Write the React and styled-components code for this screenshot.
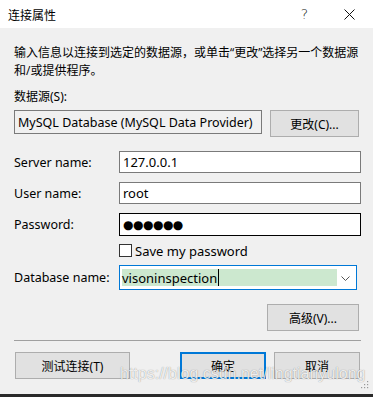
import React from 'react';
import styled, { createGlobalStyle } from 'styled-components';

const Global = createGlobalStyle`
  html, body { margin: 0; padding: 0; background: #f0f0f0; }
  body { width: 373px; height: 397px; overflow: hidden; }
  * { box-sizing: border-box; }
`;

const FONT = `"Noto Sans", "Noto Sans CJK SC", sans-serif`;

const Window = styled.div`
  position: relative;
  width: 373px;
  height: 397px;
  display: flex;
  flex-direction: column;
  background: #f0f0f0;
  font-family: ${FONT};
  font-size: 12.5px;
  color: #000;
  border-bottom: 3px solid #2a2a2a;
`;

const TitleBar = styled.div`
  height: 28px;
  background: #fff;
  display: flex;
  align-items: center;
  padding-left: 8px;
  padding-right: 1px;
`;

const Title = styled.div`
  flex: 1;
  font-size: 12px;
  font-family: "Noto Sans CJK SC", sans-serif;
`;

const CtrlButton = styled.div`
  width: 45px;
  height: 28px;
  display: flex;
  align-items: center;
  justify-content: center;
  font-size: 14px;
  font-family: "DejaVu Sans", sans-serif;
  font-weight: 300;
  color: #111;
`;

const Content = styled.div`
  flex: 1;
  display: flex;
  flex-direction: column;
  padding: 0 12px 0 14px;
`;

const Desc = styled.div`
  margin-top: 16px;
  font-size: 12px;
  line-height: 18px;
  white-space: nowrap;
  font-family: "Open Sans", "Noto Sans CJK SC", sans-serif;
`;

const SectionLabel = styled.div`
  margin-top: 8px;
  font-size: 12px;
  line-height: 18px;
`;

const SourceRow = styled.div`
  margin-top: 4px;
  display: flex;
  align-items: flex-start;
  gap: 8px;
`;

const ReadonlyField = styled.div`
  width: 248px;
  height: 24px;
  border: 1px solid #7a7a7a;
  background: #f0f0f0;
  display: flex;
  align-items: center;
  padding-left: 3px;
  font-size: 12.5px;
  white-space: nowrap;
  overflow: hidden;
`;

const Button = styled.div`
  width: ${p => p.$w}px;
  height: 27px;
  border: ${p => (p.$default ? '2px solid #0078d7' : '1px solid #adadad')};
  background: #e1e1e1;
  display: flex;
  align-items: center;
  justify-content: center;
  font-size: 12px;
  white-space: nowrap;
`;

const FieldRow = styled.div`
  margin-top: ${p => p.$mt}px;
  display: flex;
  align-items: center;
`;

const FieldLabel = styled.div`
  width: 105px;
  font-size: 12.5px;
  white-space: nowrap;
`;

const TextInput = styled.div`
  width: ${p => p.$w || 242}px;
  height: ${p => p.$h || 22}px;
  border: 1px solid ${p => p.$border || '#7a7a7a'};
  background: #fff;
  display: flex;
  align-items: center;
  padding-left: ${p => p.$pl ?? 3}px;
  font-size: 13px;
  position: relative;
`;

const Dots = styled.span`
  font-size: 12px;
  letter-spacing: -0.5px;
  font-family: "DejaVu Sans", sans-serif;
`;

const CheckRow = styled.div`
  margin-top: 8px;
  margin-left: 105px;
  height: 13px;
  display: flex;
  align-items: center;
  gap: 3px;
  font-size: 13px;
`;

const CheckBox = styled.div`
  width: 13px;
  height: 13px;
  border: 1px solid #333;
  background: #fff;
`;

const Selection = styled.div`
  width: 215px;
  height: 17px;
  background: #cce8cf;
  display: flex;
  align-items: center;
  font-size: 13px;
`;

const Caret = styled.span`
  display: inline-block;
  width: 1px;
  height: 17px;
  background: #000;
  margin-left: 1px;
`;

const Chevron = styled.svg`
  position: absolute;
  right: 6px;
  top: 10px;
`;

const RightRow = styled.div`
  margin-top: 14px;
  display: flex;
  justify-content: flex-end;
  padding-right: 2px;
`;

const Separator = styled.div`
  margin-top: 9px;
  height: 1px;
  background: #a0a0a0;
`;

const BottomRow = styled.div`
  margin-top: 11px;
  display: flex;
  align-items: center;
  padding: 0 1px 0 1px;
  gap: 8px;
`;

const Spacer = styled.div`
  flex: 1;
`;

const Watermark = styled.div`
  position: absolute;
  left: 120px;
  top: 365px;
  font-family: "Liberation Sans", sans-serif;
  font-size: 16px;
  color: rgba(255, 255, 255, 0.85);
  text-shadow: 0 0 1px rgba(0, 0, 0, 0.45);
  pointer-events: none;
  white-space: nowrap;
`;

const Grip = styled.svg`
  position: absolute;
  right: 4px;
  bottom: 5px;
`;

export default function App() {
  return (
    <Window>
      <Global />
      <TitleBar>
        <Title>连接属性</Title>
        <CtrlButton>?</CtrlButton>
        <CtrlButton>
          <svg width="11" height="11" viewBox="0 0 11 11">
            <path d="M0.5 0.5 L10.5 10.5 M10.5 0.5 L0.5 10.5" stroke="#111" strokeWidth="1" />
          </svg>
        </CtrlButton>
      </TitleBar>
      <Content>
        <Desc>
          输入信息以连接到选定的数据源，或单击“更改”选择另一个数据源
          <br />
          和/或提供程序。
        </Desc>
        <SectionLabel>数据源(S):</SectionLabel>
        <SourceRow>
          <ReadonlyField>MySQL Database (MySQL Data Provider)</ReadonlyField>
          <Button $w={89}>更改(C)...</Button>
        </SourceRow>
        <FieldRow $mt={14}>
          <FieldLabel>Server name:</FieldLabel>
          <TextInput>127.0.0.1</TextInput>
        </FieldRow>
        <FieldRow $mt={9}>
          <FieldLabel>User name:</FieldLabel>
          <TextInput>root</TextInput>
        </FieldRow>
        <FieldRow $mt={9}>
          <FieldLabel>Password:</FieldLabel>
          <TextInput $border="#000" $h={23}>
            <Dots>●●●●●●</Dots>
          </TextInput>
        </FieldRow>
        <CheckRow>
          <CheckBox />
          <span>Save my password</span>
        </CheckRow>
        <FieldRow $mt={8}>
          <FieldLabel>Database name:</FieldLabel>
          <TextInput $w={238} $h={25} $border="#0078d7" $pl={2}>
            <Selection>
              visoninspection<Caret />
            </Selection>
            <Chevron width="9" height="5" viewBox="0 0 9 5">
              <path d="M0.5 0.5 L4.5 4.5 L8.5 0.5" stroke="#555" strokeWidth="1" fill="none" />
            </Chevron>
          </TextInput>
        </FieldRow>
        <RightRow>
          <Button $w={92}>高级(V)...</Button>
        </RightRow>
        <Separator />
        <BottomRow>
          <Button $w={115}>测试连接(T)</Button>
          <Spacer />
          <Button $w={86} $default>确定</Button>
          <Button $w={86}>取消</Button>
        </BottomRow>
      </Content>
      <Watermark>https://blog.csdn.net/lingtianyulong</Watermark>
      <Grip width="8" height="8" viewBox="0 0 8 8">
        <rect x="6" y="0" width="1.2" height="1.2" fill="#999" />
        <rect x="3" y="3" width="1.2" height="1.2" fill="#999" />
        <rect x="6" y="3" width="1.2" height="1.2" fill="#999" />
        <rect x="0" y="6" width="1.2" height="1.2" fill="#999" />
        <rect x="3" y="6" width="1.2" height="1.2" fill="#999" />
        <rect x="6" y="6" width="1.2" height="1.2" fill="#999" />
      </Grip>
    </Window>
  );
}
